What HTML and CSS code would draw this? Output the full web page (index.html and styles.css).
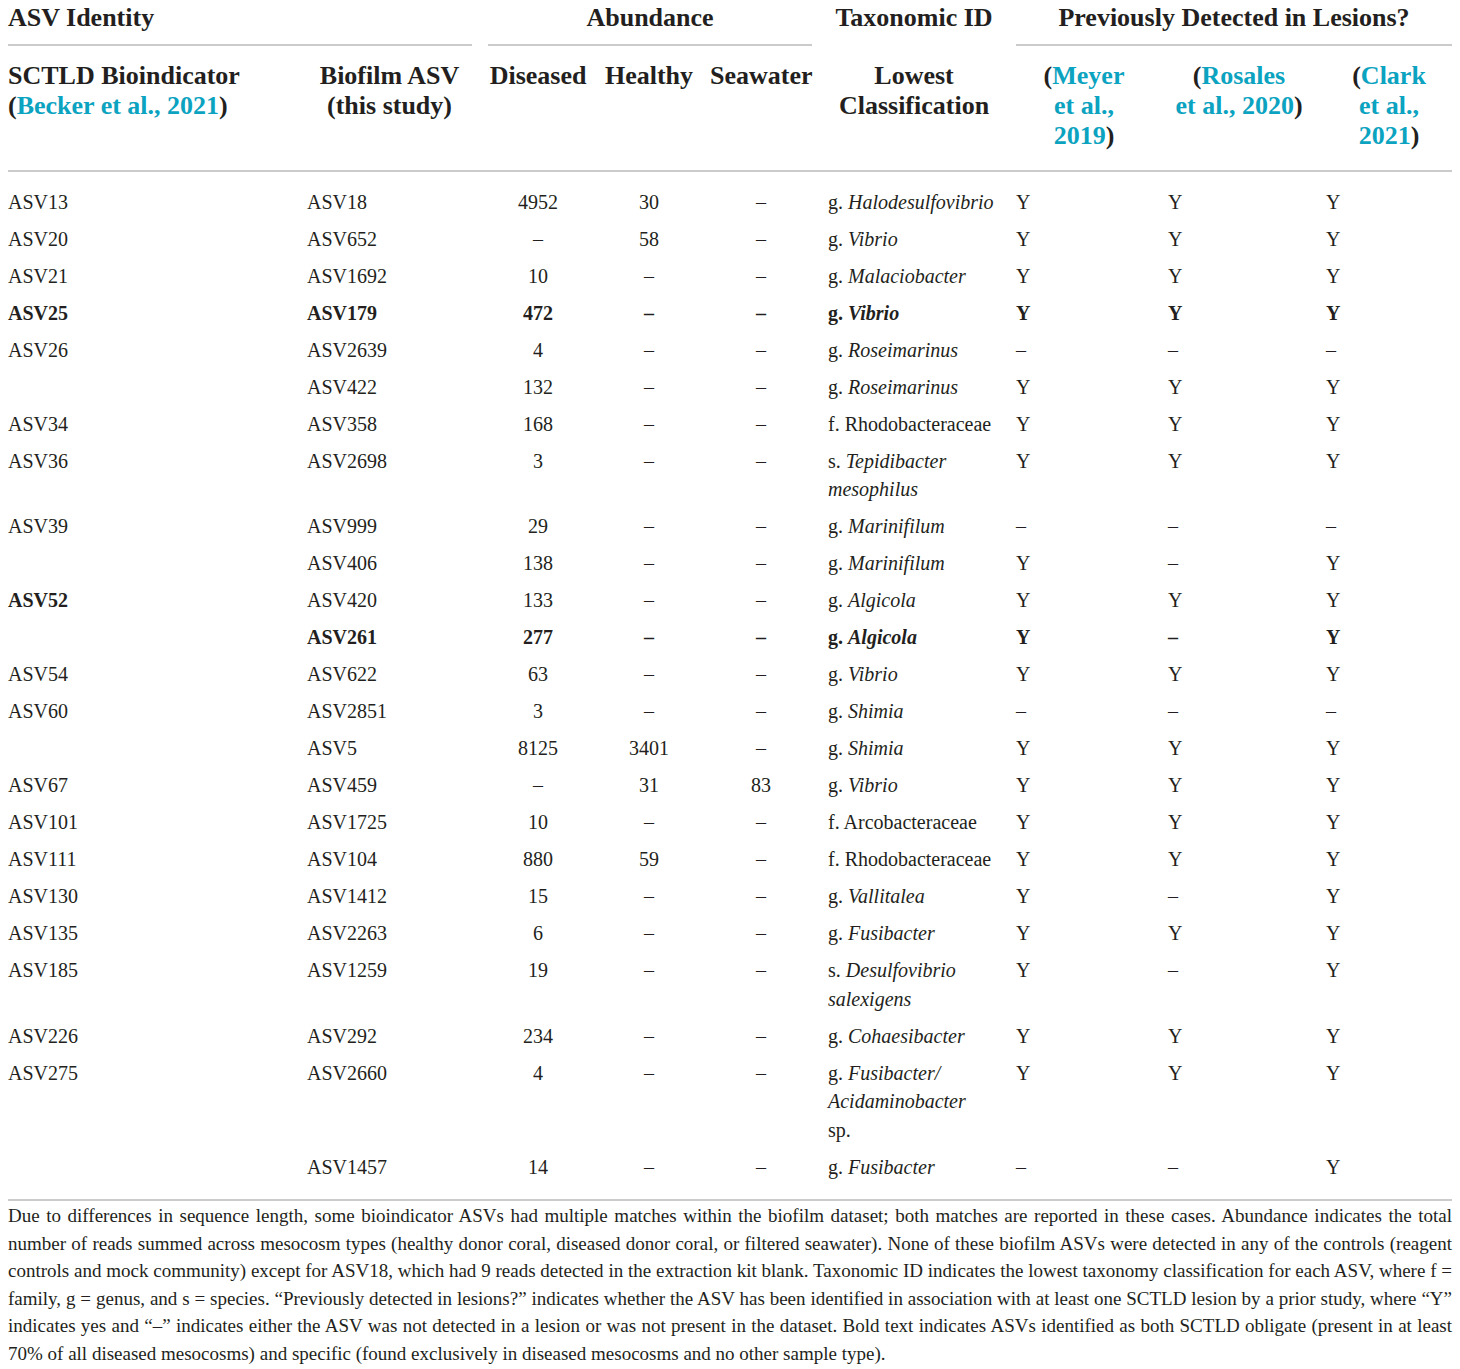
FILE: index.html
```html
<!DOCTYPE html>
<html lang="en">
<head>
<meta charset="utf-8">
<title>SCTLD bioindicator ASVs</title>
<link rel="stylesheet" href="styles.css">
</head>
<body>
<div class="wrap">
<table class="data">
  <colgroup>
    <col class="c1"><col class="c2"><col class="c3"><col class="c4"><col class="c5"><col class="c6"><col class="c7"><col class="c8"><col class="c9">
  </colgroup>
  <thead>
    <tr class="group">
      <th colspan="2" class="left"><div class="rule">ASV Identity</div></th>
      <th colspan="3"><div class="rule">Abundance</div></th>
      <th><div class="norule">Taxonomic ID</div></th>
      <th colspan="3"><div class="rule">Previously Detected in Lesions?</div></th>
    </tr>
    <tr class="cols">
      <th class="left">SCTLD Bioindicator<br>(<a href="#">Becker et al., 2021</a>)</th>
      <th>Biofilm ASV<br>(this study)</th>
      <th>Diseased</th>
      <th>Healthy</th>
      <th>Seawater</th>
      <th>Lowest<br>Classification</th>
      <th>(<a href="#">Meyer<br>et al.,<br>2019</a>)</th>
      <th>(<a href="#">Rosales<br>et al., 2020</a>)</th>
      <th>(<a href="#">Clark<br>et al.,<br>2021</a>)</th>
    </tr>
  </thead>
  <tbody>
    <tr><td>ASV13</td><td>ASV18</td><td class="n">4952</td><td class="n">30</td><td class="n">–</td><td>g. <i>Halodesulfovibrio</i></td><td>Y</td><td>Y</td><td>Y</td></tr>
    <tr><td>ASV20</td><td>ASV652</td><td class="n">–</td><td class="n">58</td><td class="n">–</td><td>g. <i>Vibrio</i></td><td>Y</td><td>Y</td><td>Y</td></tr>
    <tr><td>ASV21</td><td>ASV1692</td><td class="n">10</td><td class="n">–</td><td class="n">–</td><td>g. <i>Malaciobacter</i></td><td>Y</td><td>Y</td><td>Y</td></tr>
    <tr class="b"><td>ASV25</td><td>ASV179</td><td class="n">472</td><td class="n">–</td><td class="n">–</td><td>g. <i>Vibrio</i></td><td>Y</td><td>Y</td><td>Y</td></tr>
    <tr><td>ASV26</td><td>ASV2639</td><td class="n">4</td><td class="n">–</td><td class="n">–</td><td>g. <i>Roseimarinus</i></td><td>–</td><td>–</td><td>–</td></tr>
    <tr><td></td><td>ASV422</td><td class="n">132</td><td class="n">–</td><td class="n">–</td><td>g. <i>Roseimarinus</i></td><td>Y</td><td>Y</td><td>Y</td></tr>
    <tr><td>ASV34</td><td>ASV358</td><td class="n">168</td><td class="n">–</td><td class="n">–</td><td>f. Rhodobacteraceae</td><td>Y</td><td>Y</td><td>Y</td></tr>
    <tr><td>ASV36</td><td>ASV2698</td><td class="n">3</td><td class="n">–</td><td class="n">–</td><td>s. <i>Tepidibacter<br>mesophilus</i></td><td>Y</td><td>Y</td><td>Y</td></tr>
    <tr><td>ASV39</td><td>ASV999</td><td class="n">29</td><td class="n">–</td><td class="n">–</td><td>g. <i>Marinifilum</i></td><td>–</td><td>–</td><td>–</td></tr>
    <tr><td></td><td>ASV406</td><td class="n">138</td><td class="n">–</td><td class="n">–</td><td>g. <i>Marinifilum</i></td><td>Y</td><td>–</td><td>Y</td></tr>
    <tr><td class="bold">ASV52</td><td>ASV420</td><td class="n">133</td><td class="n">–</td><td class="n">–</td><td>g. <i>Algicola</i></td><td>Y</td><td>Y</td><td>Y</td></tr>
    <tr class="b"><td></td><td>ASV261</td><td class="n">277</td><td class="n">–</td><td class="n">–</td><td>g. <i>Algicola</i></td><td>Y</td><td>–</td><td>Y</td></tr>
    <tr><td>ASV54</td><td>ASV622</td><td class="n">63</td><td class="n">–</td><td class="n">–</td><td>g. <i>Vibrio</i></td><td>Y</td><td>Y</td><td>Y</td></tr>
    <tr><td>ASV60</td><td>ASV2851</td><td class="n">3</td><td class="n">–</td><td class="n">–</td><td>g. <i>Shimia</i></td><td>–</td><td>–</td><td>–</td></tr>
    <tr><td></td><td>ASV5</td><td class="n">8125</td><td class="n">3401</td><td class="n">–</td><td>g. <i>Shimia</i></td><td>Y</td><td>Y</td><td>Y</td></tr>
    <tr><td>ASV67</td><td>ASV459</td><td class="n">–</td><td class="n">31</td><td class="n">83</td><td>g. <i>Vibrio</i></td><td>Y</td><td>Y</td><td>Y</td></tr>
    <tr><td>ASV101</td><td>ASV1725</td><td class="n">10</td><td class="n">–</td><td class="n">–</td><td>f. Arcobacteraceae</td><td>Y</td><td>Y</td><td>Y</td></tr>
    <tr><td>ASV111</td><td>ASV104</td><td class="n">880</td><td class="n">59</td><td class="n">–</td><td>f. Rhodobacteraceae</td><td>Y</td><td>Y</td><td>Y</td></tr>
    <tr><td>ASV130</td><td>ASV1412</td><td class="n">15</td><td class="n">–</td><td class="n">–</td><td>g. <i>Vallitalea</i></td><td>Y</td><td>–</td><td>Y</td></tr>
    <tr><td>ASV135</td><td>ASV2263</td><td class="n">6</td><td class="n">–</td><td class="n">–</td><td>g. <i>Fusibacter</i></td><td>Y</td><td>Y</td><td>Y</td></tr>
    <tr><td>ASV185</td><td>ASV1259</td><td class="n">19</td><td class="n">–</td><td class="n">–</td><td>s. <i>Desulfovibrio<br>salexigens</i></td><td>Y</td><td>–</td><td>Y</td></tr>
    <tr><td>ASV226</td><td>ASV292</td><td class="n">234</td><td class="n">–</td><td class="n">–</td><td>g. <i>Cohaesibacter</i></td><td>Y</td><td>Y</td><td>Y</td></tr>
    <tr><td>ASV275</td><td>ASV2660</td><td class="n">4</td><td class="n">–</td><td class="n">–</td><td>g. <i>Fusibacter/<br>Acidaminobacter</i><br>sp.</td><td>Y</td><td>Y</td><td>Y</td></tr>
    <tr><td></td><td>ASV1457</td><td class="n">14</td><td class="n">–</td><td class="n">–</td><td>g. <i>Fusibacter</i></td><td>–</td><td>–</td><td>Y</td></tr>
  </tbody>
</table>
<p class="note">Due to differences in sequence length, some bioindicator ASVs had multiple matches within the biofilm dataset; both matches are reported in these cases. Abundance indicates the total number of reads summed across mesocosm types (healthy donor coral, diseased donor coral, or filtered seawater). None of these biofilm ASVs were detected in any of the controls (reagent controls and mock community) except for ASV18, which had 9 reads detected in the extraction kit blank. Taxonomic ID indicates the lowest taxonomy classification for each ASV, where f = family, g = genus, and s = species. “Previously detected in lesions?” indicates whether the ASV has been identified in association with at least one SCTLD lesion by a prior study, where “Y” indicates yes and “–” indicates either the ASV was not detected in a lesion or was not present in the dataset. Bold text indicates ASVs identified as both SCTLD obligate (present in at least 70% of all diseased mesocosms) and specific (found exclusively in diseased mesocosms and no other sample type).</p>
</div>
</body>
</html>
```

FILE: styles.css
```css
html, body {
  margin: 0;
  padding: 0;
  background: #ffffff;
}

body {
  font-family: "Liberation Serif", "Times New Roman", serif;
  color: #231f20;
}

.wrap {
  padding: 3px 8px 0 8px;
}

.data {
  width: 1444px;
  border-collapse: collapse;
  table-layout: fixed;
}

.c1 { width: 291px; }
.c2 { width: 181px; }
.c3 { width: 116px; }
.c4 { width: 106px; }
.c5 { width: 118px; }
.c6 { width: 188px; }
.c7 { width: 152px; }
.c8 { width: 158px; }
.c9 { width: 134px; }

.data th,
.data td {
  padding: 0 8px;
}

.data th:first-child,
.data td:first-child {
  padding-left: 0;
}

.data th:last-child,
.data td:last-child {
  padding-right: 0;
}

.data th {
  font-size: 26px;
  line-height: 30px;
  font-weight: bold;
  text-align: center;
  vertical-align: top;
}

.data th.left {
  text-align: left;
}

.group .rule {
  padding-bottom: 11px;
  border-bottom: 2px solid #cbcbcb;
}

.group .norule {
  padding-bottom: 13px;
}

.cols th {
  padding-top: 15px;
  padding-bottom: 19px;
}

thead tr.cols {
  border-bottom: 2px solid #cbcbcb;
}

.data a {
  color: #0ba3bf;
  text-decoration: none;
}

.data td {
  font-size: 20px;
  line-height: 28.4px;
  padding-top: 4.3px;
  padding-bottom: 4.3px;
  text-align: left;
  vertical-align: top;
}

.data td.n {
  text-align: center;
}

tbody tr:first-child td {
  padding-top: 16px;
}

tbody tr:last-child td {
  padding-bottom: 18px;
}

tbody tr:last-child {
  border-bottom: 2px solid #cbcbcb;
}

tr.b td,
td.bold {
  font-weight: bold;
}

.note {
  margin: 1px 0 0 0;
  font-size: 19px;
  line-height: 27.6px;
  text-align: justify;
  color: #231f20;
}
```
